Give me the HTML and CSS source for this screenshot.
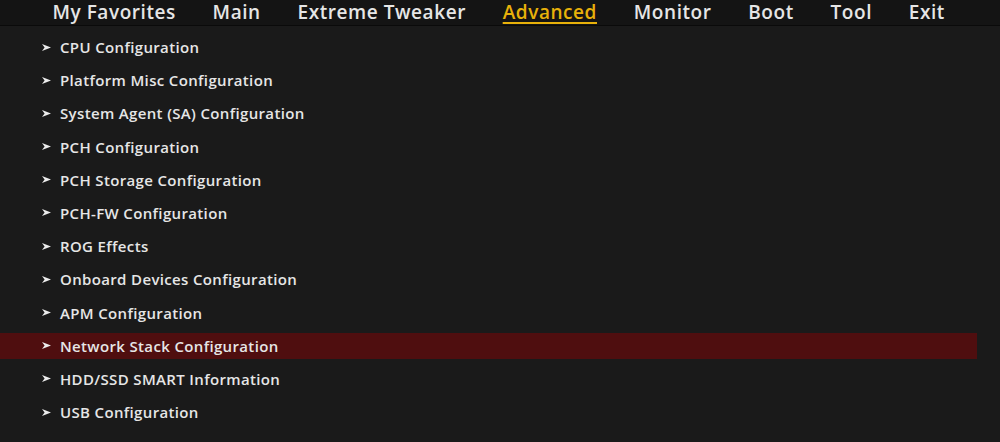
FILE: index.html
```html
<!DOCTYPE html>
<html lang="en">
<head>
    <meta charset="UTF-8">
    <title>Advanced</title>
    <link rel="stylesheet" href="styles.css">
</head>
<body>
    <!-- Top menu tabs -->
    <div class="menu-bar">
        <span class="tab">My Favorites</span>
        <span class="tab">Main</span>
        <span class="tab">Extreme Tweaker</span>
        <span class="tab active">Advanced</span>
        <span class="tab">Monitor</span>
        <span class="tab">Boot</span>
        <span class="tab">Tool</span>
        <span class="tab">Exit</span>
    </div>

    <!-- Advanced submenu list -->
    <ul class="item-list">
        <li class="item"><svg class="arrow" viewBox="0 0 9 7"><polygon points="0,0 9,3.5 0,7 2.6,3.5"/></svg>CPU Configuration</li>
        <li class="item"><svg class="arrow" viewBox="0 0 9 7"><polygon points="0,0 9,3.5 0,7 2.6,3.5"/></svg>Platform Misc Configuration</li>
        <li class="item"><svg class="arrow" viewBox="0 0 9 7"><polygon points="0,0 9,3.5 0,7 2.6,3.5"/></svg>System Agent (SA) Configuration</li>
        <li class="item"><svg class="arrow" viewBox="0 0 9 7"><polygon points="0,0 9,3.5 0,7 2.6,3.5"/></svg>PCH Configuration</li>
        <li class="item"><svg class="arrow" viewBox="0 0 9 7"><polygon points="0,0 9,3.5 0,7 2.6,3.5"/></svg>PCH Storage Configuration</li>
        <li class="item"><svg class="arrow" viewBox="0 0 9 7"><polygon points="0,0 9,3.5 0,7 2.6,3.5"/></svg>PCH-FW Configuration</li>
        <li class="item"><svg class="arrow" viewBox="0 0 9 7"><polygon points="0,0 9,3.5 0,7 2.6,3.5"/></svg>ROG Effects</li>
        <li class="item"><svg class="arrow" viewBox="0 0 9 7"><polygon points="0,0 9,3.5 0,7 2.6,3.5"/></svg>Onboard Devices Configuration</li>
        <li class="item"><svg class="arrow" viewBox="0 0 9 7"><polygon points="0,0 9,3.5 0,7 2.6,3.5"/></svg>APM Configuration</li>
        <li class="item selected"><svg class="arrow" viewBox="0 0 9 7"><polygon points="0,0 9,3.5 0,7 2.6,3.5"/></svg>Network Stack Configuration</li>
        <li class="item"><svg class="arrow" viewBox="0 0 9 7"><polygon points="0,0 9,3.5 0,7 2.6,3.5"/></svg>HDD/SSD SMART Information</li>
        <li class="item"><svg class="arrow" viewBox="0 0 9 7"><polygon points="0,0 9,3.5 0,7 2.6,3.5"/></svg>USB Configuration</li>
    </ul>
</body>
</html>
```

FILE: styles.css
```css
body {
    margin: 0;
    background-color: #1a1a1a;
    font-family: "Open Sans", sans-serif;
    color: #e6e6e6;
    overflow: hidden;
}
.menu-bar {
    display: flex;
    height: 25px;
    padding-left: 34px;
    background-color: #141414;
    border-bottom: 1px solid #0a0a0a;
}
.tab {
    padding: 0 18.4px;
    font-size: 19px;
    font-weight: 600;
    letter-spacing: 0.56px;
    line-height: 26px;
    margin-top: -1px;
    color: #e6e6e6;
}
.tab.active {
    color: #e8b10a;
    text-decoration: underline;
    text-decoration-thickness: 2px;
    text-underline-offset: 3px;
}
.item-list {
    list-style: none;
    margin: 0;
    padding: 8px 0 0 0;
    width: 977px;
}
.item {
    display: flex;
    align-items: center;
    height: 26px;
    margin-bottom: 7.2px;
    padding-left: 42px;
    font-size: 15px;
    font-weight: 600;
    letter-spacing: 0.35px;
}
.item.selected {
    background-color: #4f0e0f;
}
.arrow {
    width: 9px;
    height: 7px;
    margin-right: 9px;
    fill: #ececec;
}
```
